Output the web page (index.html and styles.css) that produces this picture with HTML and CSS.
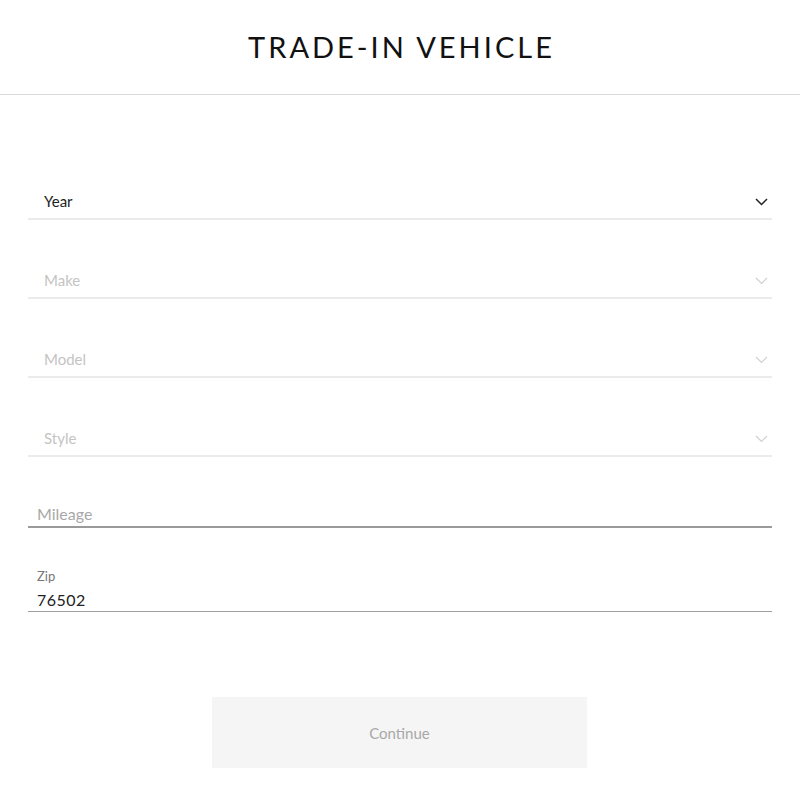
FILE: index.html
```html
<!DOCTYPE html>
<html lang="en">
<head>
    <meta charset="UTF-8">
    <meta name="viewport" content="width=device-width, initial-scale=1.0">
    <title>Trade-In Vehicle</title>
    <link rel="stylesheet" href="styles.css">
</head>
<body>

    <header class="page-header">
        <h1>TRADE-IN VEHICLE</h1>
    </header>

    <form class="trade-form">
        <div class="select-field active">
            <span>Year</span>
            <svg class="chevron" width="13" height="8" viewBox="0 0 13 8"><path d="M1 1l5.5 5.5 5.5-5.5" fill="none" stroke="currentColor" stroke-width="1.5"/></svg>
        </div>
        <div class="select-field">
            <span>Make</span>
            <svg class="chevron" width="13" height="8" viewBox="0 0 13 8"><path d="M1 1l5.5 5.5 5.5-5.5" fill="none" stroke="currentColor" stroke-width="1.2"/></svg>
        </div>
        <div class="select-field">
            <span>Model</span>
            <svg class="chevron" width="13" height="8" viewBox="0 0 13 8"><path d="M1 1l5.5 5.5 5.5-5.5" fill="none" stroke="currentColor" stroke-width="1.2"/></svg>
        </div>
        <div class="select-field">
            <span>Style</span>
            <svg class="chevron" width="13" height="8" viewBox="0 0 13 8"><path d="M1 1l5.5 5.5 5.5-5.5" fill="none" stroke="currentColor" stroke-width="1.2"/></svg>
        </div>

        <div class="text-field mileage">
            <input type="text" placeholder="Mileage">
        </div>

        <div class="text-field zip">
            <label for="zip">Zip</label>
            <input type="text" id="zip" value="76502">
        </div>

        <div class="actions">
            <button type="button" class="continue-btn" disabled>Continue</button>
        </div>
    </form>

</body>
</html>
```

FILE: styles.css
```css
body, html {
    margin: 0;
    padding: 0;
    background: #fff;
    font-family: Lato, 'Open Sans', sans-serif;
    color: #222;
}

.page-header {
    height: 94px;
    border-bottom: 1px solid #d9d9d9;
    display: flex;
    align-items: center;
    justify-content: center;
}

.page-header h1 {
    margin: 0;
    padding: 0 0 2px 3px;
    font-family: Lato, sans-serif;
    font-weight: 400;
    font-size: 29px;
    letter-spacing: 3px;
    color: #111;
}

.trade-form {
    padding: 81px 28px 0;
}

.select-field {
    box-sizing: content-box;
    height: 35px;
    border-bottom: 2px solid #ebebeb;
    display: flex;
    align-items: flex-end;
    justify-content: space-between;
    padding: 0 4px 7px 16px;
    margin-bottom: 35px;
    font-size: 15px;
    line-height: 20px;
    color: #c4c4c4;
}

.select-field .chevron {
    margin-bottom: 5px;
    color: #d0d0d0;
}

.select-field.active {
    color: #222;
}

.select-field.active .chevron {
    color: #222;
}

.text-field input {
    display: block;
    width: 100%;
    box-sizing: border-box;
    border: none;
    outline: none;
    padding: 0 9px;
    font-family: Lato, sans-serif;
    font-size: 16px;
    color: #222;
    background: transparent;
}

.text-field input::placeholder {
    color: #a8a8a8;
}

.mileage {
    border-bottom: 2px solid #9a9a9a;
    padding-bottom: 3px;
    margin-top: 47px; /* collapses with the 35px above */
}

.zip {
    margin-top: 40px;
    border-bottom: 1px solid #a0a0a0;
    padding-bottom: 2px;
}

.zip label {
    display: block;
    padding: 0 9px;
    font-size: 13px;
    color: #777;
    margin-bottom: 6px;
}

.zip input {
    letter-spacing: 0.5px;
}

.actions {
    display: flex;
    justify-content: center;
    margin-top: 85px;
}

.continue-btn {
    width: 375px;
    height: 71px;
    border: none;
    background: #f5f5f5;
    font-family: Lato, sans-serif;
    font-size: 15px;
    color: #a8a8a8;
    margin-left: -1px;
}
```
